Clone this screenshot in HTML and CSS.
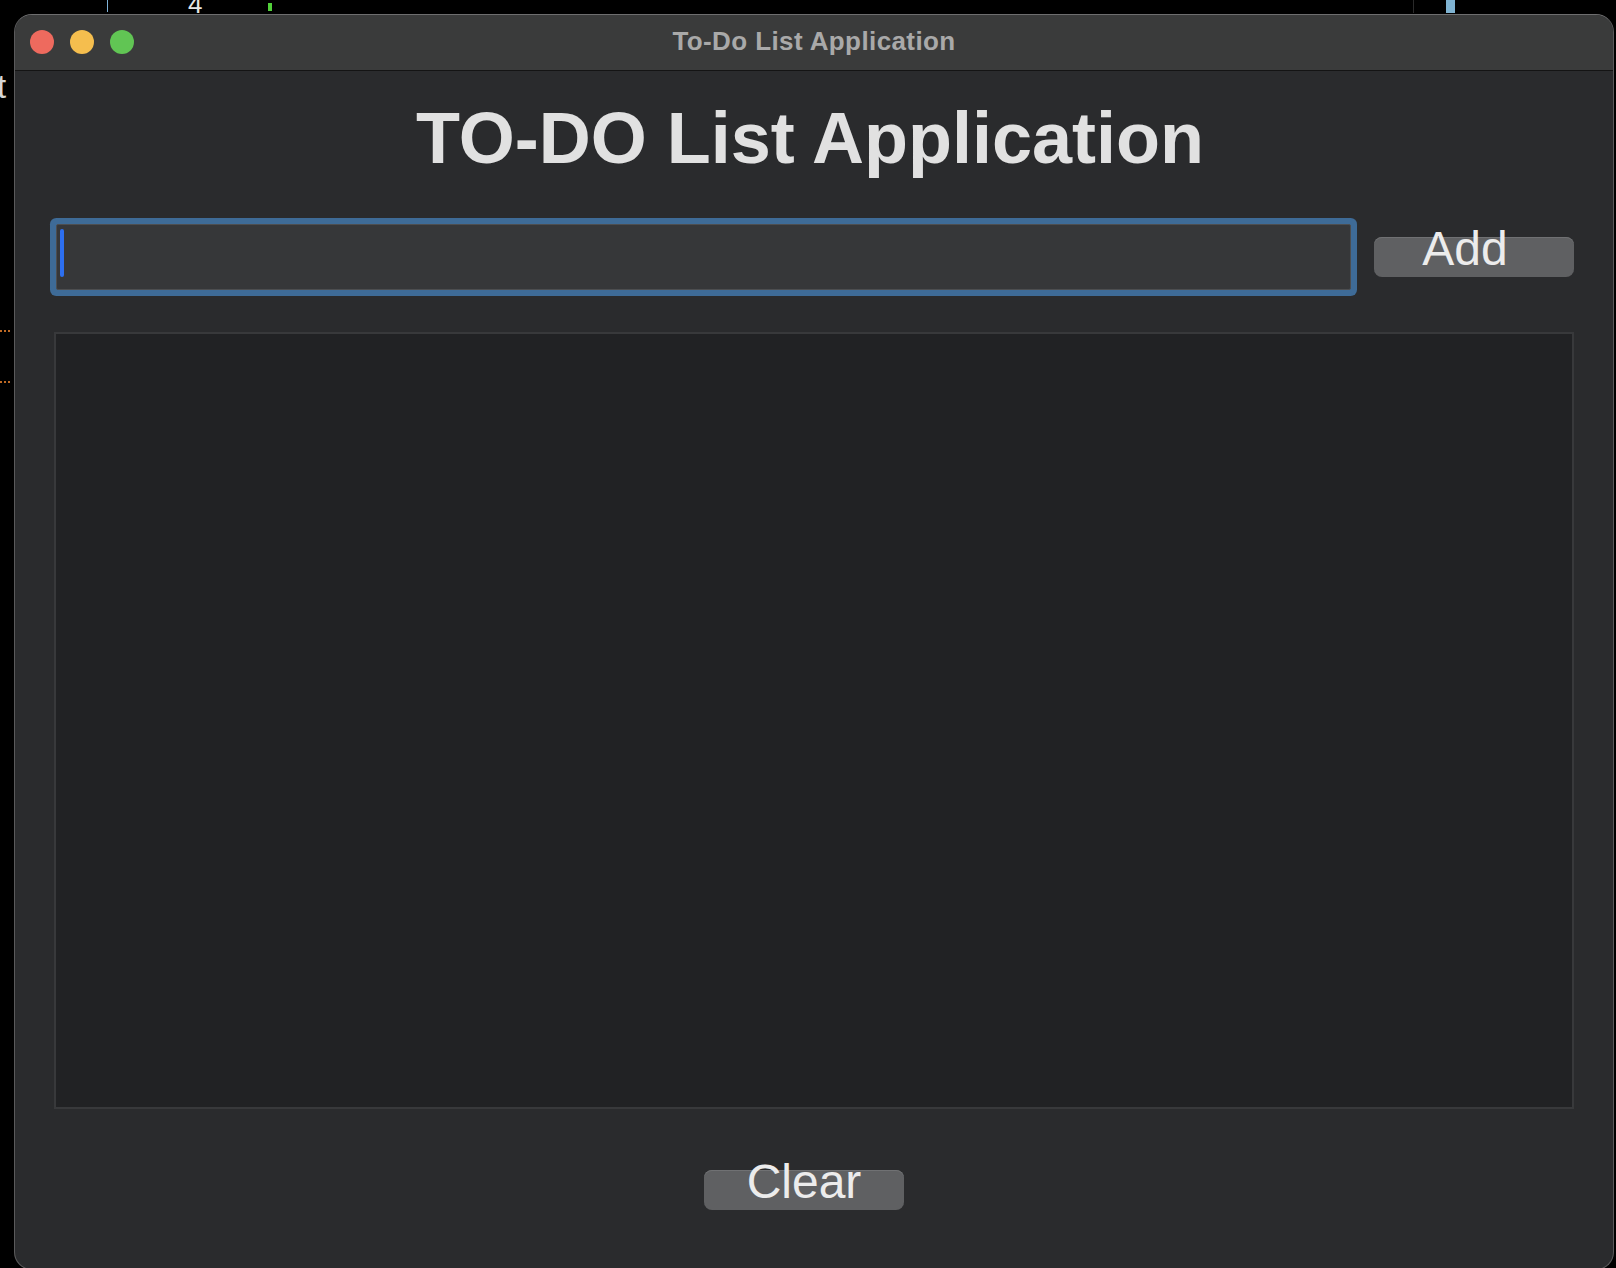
FILE: index.html
```html
<!DOCTYPE html>
<html lang="en">
<head>
<meta charset="utf-8">
<title>To-Do List Application</title>
<link rel="stylesheet" href="styles.css">
</head>
<body>
  <div class="desk-bits">
    <span class="bit bit-line-blue"></span>
    <span class="bit bit-four">4</span>
    <span class="bit bit-green"></span>
    <span class="bit bit-dark"></span>
    <span class="bit bit-blue-block"></span>
    <span class="bit bit-t">t</span>
    <span class="bit bit-dots bit-dots-1"></span>
    <span class="bit bit-dots bit-dots-2"></span>
  </div>
  <div class="window">
    <div class="titlebar">
      <div class="lights">
        <span class="light red"></span>
        <span class="light yellow"></span>
        <span class="light green"></span>
      </div>
      <div class="title">To-Do List Application</div>
      <div></div>
    </div>
    <div class="content">
      <h1 class="heading">TO-DO List Application</h1>
      <div class="entry-row">
        <div class="entry"><span class="caret"></span></div>
        <div class="btn btn-add">Add</div>
      </div>
      <div class="listbox"></div>
      <div class="footer">
        <div class="btn btn-clear">Clear</div>
      </div>
    </div>
  </div>
</body>
</html>
```

FILE: styles.css
```css
* { box-sizing: border-box; }

html, body {
  margin: 0;
  background: #000;
}

body {
  width: 1616px;
  height: 1268px;
  overflow: hidden;
  padding: 14px 0 0 14px;
  position: relative;
  font-family: "Liberation Sans", Arial, sans-serif;
}

.desk-bits .bit { position: absolute; display: block; }
.bit-line-blue { left: 107px; top: 0; width: 1px; height: 12px; background: #7fb3d9; }
.bit-four { left: 188px; top: -9px; color: #e6e6e6; font-size: 26px; line-height: 26px; }
.bit-green { left: 268px; top: 3px; width: 4px; height: 8px; background: #52d13a; }
.bit-dark { left: 1413px; top: 0; width: 1px; height: 13px; background: #2a2a2a; }
.bit-blue-block { left: 1446px; top: 0; width: 9px; height: 13px; background: #7fb3d2; }
.bit-t { left: -3px; top: 70px; color: #d6d6d6; font-size: 33px; line-height: 33px; }
.bit-dots { left: 0; width: 12px; height: 2px;
  background: repeating-linear-gradient(90deg, #c06a24 0 2px, transparent 2px 4px); }
.bit-dots-1 { top: 330px; }
.bit-dots-2 { top: 381px; }

.window {
  width: 1600px;
  height: 1256px;
  border: 1px solid #5a5a5b;
  border-top-color: #6e6e6f;
  border-radius: 18px;
  overflow: hidden;
  background: #2a2b2d;
  display: flex;
  flex-direction: column;
  position: relative;
}

.titlebar {
  height: 56px;
  flex: none;
  background: #3a3b3b;
  border-bottom: 1px solid #141414;
  display: grid;
  grid-template-columns: 1fr auto 1fr;
  align-items: center;
}

.lights {
  display: flex;
  gap: 16px;
  padding-left: 15px;
  padding-bottom: 1px;
}

.light {
  width: 24px;
  height: 24px;
  border-radius: 50%;
  display: block;
}
.light.red { background: #ee6a5e; }
.light.yellow { background: #f5be4e; }
.light.green { background: #61c554; }

.title {
  color: #a9a9a9;
  font-weight: bold;
  font-size: 26px;
  letter-spacing: 0.4px;
  line-height: 52px;
  padding-bottom: 3px;
}

.content {
  flex: 1;
  display: flex;
  flex-direction: column;
  padding: 0 39px 0 39px;
}

.heading {
  margin: 31px 0 0 0;
  text-align: center;
  color: #e1e1e1;
  font-size: 72px;
  line-height: 72px;
  font-weight: bold;
  padding-right: 8px;
}

.entry-row {
  margin-top: 50px;
  display: flex;
  align-items: center;
  gap: 23px;
}

.entry {
  flex: 1;
  height: 66px;
  margin-left: 2px;
  background: #363739;
  border: 1px solid #4d4e50;
  box-shadow: 0 0 0 6px #3e6b97;
  border-radius: 2px;
  padding: 4px 0 0 3px;
}

.caret {
  display: block;
  width: 4px;
  height: 48px;
  border-radius: 2px;
  background: #2d6ff0;
}

.btn {
  height: 40px;
  width: 200px;
  border-radius: 8px;
  background: #5f6062;
  box-shadow: inset 0 1px 0 #707173;
  color: #ececec;
  font-size: 48px;
  line-height: 23px;
  text-align: center;
  flex: none;
}

.btn-add { padding-right: 18px; }

.listbox {
  margin-top: 42px;
  height: 777px;
  background: #212224;
  border: 2px solid #38393b;
}

.footer {
  margin-top: 61px;
  display: flex;
  justify-content: center;
  padding-right: 20px;
}
```
